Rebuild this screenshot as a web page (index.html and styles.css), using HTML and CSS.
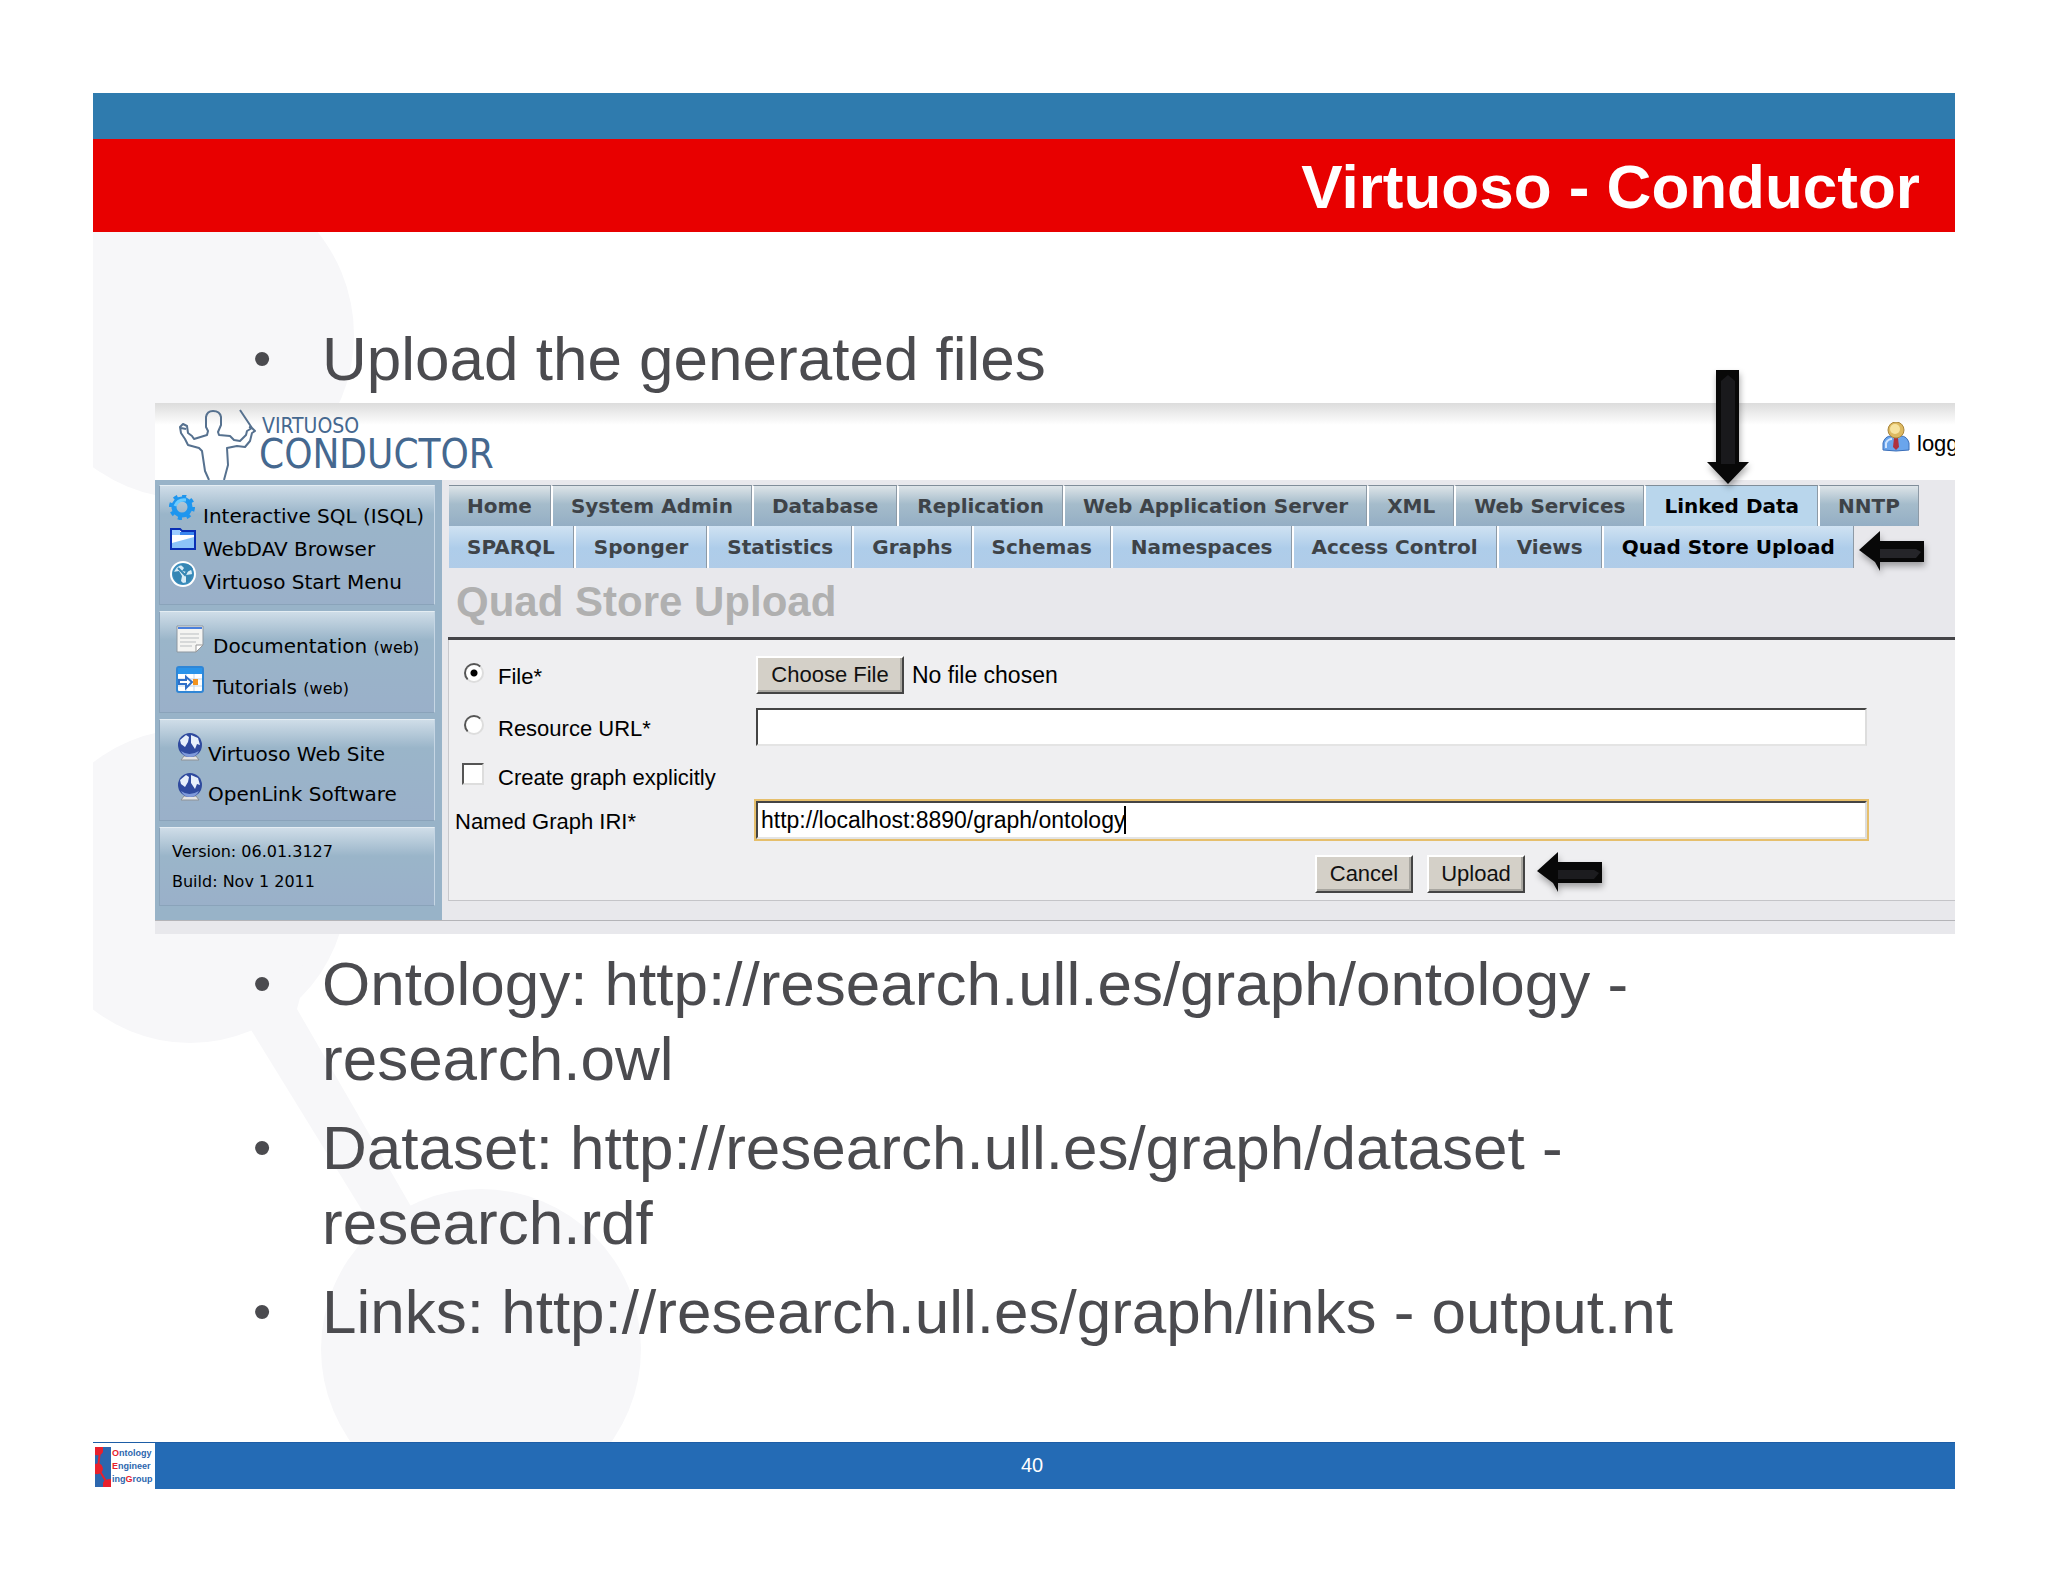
FILE: index.html
```html
<!DOCTYPE html>
<html lang="en">
<head>
<meta charset="utf-8">
<title>Virtuoso - Conductor</title>
<link rel="stylesheet" href="styles.css">
</head>
<body>
<main class="slide">
  <svg class="backdrop" width="600" height="1212" viewBox="93 232 600 1212" aria-hidden="true">
    <g fill="#f7f7f9"><circle cx="190" cy="335" r="164"/><circle cx="190" cy="886" r="157"/><circle cx="481" cy="1349" r="160"/><path d="M240 1012L310 960L297 1009L420 1222L368 1220Z"/></g>
  </svg>
  <header class="masthead">
    <div class="strip"></div>
    <h1 class="title">Virtuoso - Conductor</h1>
  </header>

  <ul class="points points-top"><li>Upload the generated files</li></ul>

  <section class="shot">
    <div class="brand">
      <svg class="figure" width="80" height="72" viewBox="0 0 80 72" fill="none" stroke="#56718f" stroke-width="2" stroke-linejoin="round"><path d="M30 71L26 62L23 42L20 39L9 36L6 30L2 24L1 18L4 15L8 17L9 24L13 27L15 30L28 26L29 22L27 18V8Q28 2 34 2Q41 2 42 8V16L39 23L40 26L51 27L55 31L61 32L67 26L68 22L73 19L61 1M70 18L73 19L76 22L73 24L71 32L66 38L58 37L48 39L49 56L45 71M2 19L7 20"/></svg>
      <div class="wordmark"><span class="word-small">VIRTUOSO</span><span class="word-big">CONDUCTOR</span></div>
      <div class="login">
        <svg width="28" height="30" viewBox="0 0 28 30"><path d="M1 28V21Q3 14 9 14H19Q25 14 27 21V28Q14 30 1 28Z" fill="#6aa5ec" stroke="#3c6fb8"/><path d="M4 26V21Q6 17 10 17" stroke="#cfe4ff" stroke-width="2" fill="none"/><path d="M9 14L14 18L19 14Z" fill="#fff"/><path d="M12 16H16L17 25L14 28L11 25Z" fill="#b0303c"/><circle cx="14" cy="8" r="8" fill="#ddb961" stroke="#a9853a"/><circle cx="13" cy="7" r="5" fill="#f7e3a0"/></svg>
        <span>logg</span>
      </div>
    </div>
    <div class="app">
      <nav class="side" aria-label="Tools">
        <div class="box box-tools">
          <a href="#"><svg width="28" height="28" viewBox="0 0 28 28"><circle cx="13" cy="12" r="8" fill="none" stroke="#1e96ee" stroke-width="5"/><circle cx="13" cy="12" r="11" fill="none" stroke="#1e96ee" stroke-width="4" stroke-dasharray="4 4.600"/><path d="M6 11Q9 4 17 5" stroke="#6cccff" stroke-width="3" fill="none"/></svg>Interactive SQL (ISQL)</a>
          <a href="#"><svg width="28" height="28" viewBox="0 0 28 28"><path d="M2 1H11L13 3H26V21H2Z" fill="#fff" stroke="#0a2fb4" stroke-width="2"/><path d="M3 2H11V7H3Z" fill="#9cccff"/><path d="M11 4H25V7H11Z" fill="#3a86ee"/><path d="M3 15L25 9V20H3Z" fill="#8cc4f8"/></svg>WebDAV Browser</a>
          <a href="#"><svg width="28" height="28" viewBox="0 0 28 28"><circle cx="14" cy="13" r="13" fill="#fff"/><circle cx="14" cy="13" r="10" fill="#d8ecf6" stroke="#3d8fbe" stroke-width="2"/><path d="M4 11L10 10L13 15L12 20L15 23L9 22Q4 18 4 11ZM11 3L15 7L13 10L18 11L24 8Q22 3 16 3ZM17 14L24 13L21 20L17 22Z" fill="#3586b4"/><path d="M9 7L16 14L20 6" stroke="#3586b4" stroke-width="2" fill="none"/></svg>Virtuoso Start Menu</a>
        </div>
        <div class="box box-docs">
          <a href="#"><svg width="28" height="28" viewBox="0 0 28 28"><path d="M1 1H27V20L20 27H1Z" fill="#f4f4f2" stroke="#8d97a0"/><path d="M2 2H26V4H2Z" fill="#4b80dc"/><path d="M4 9H23M4 13H23M4 17H20M4 21H16" stroke="#b9bdc0"/><path d="M20 27V20H27Z" fill="#fff" stroke="#999"/></svg><span>Documentation <small>(web)</small></span></a>
          <a href="#"><svg width="28" height="28" viewBox="0 0 28 28"><rect x="1" y="1" width="26" height="25" rx="2" fill="#fff" stroke="#2f86d6" stroke-width="2"/><path d="M2 2H26V8H2Z" fill="#2a94ea"/><path d="M10 8V25M18 8V25M2 13H26M2 20H26" stroke="#c3d8ec"/><path d="M3 14H10V11L16 16L10 22V18H3Z" fill="#fff" stroke="#2f6fc8" stroke-width="2"/><rect x="17" y="13" width="5" height="6" fill="#f29422"/></svg><span>Tutorials <small>(web)</small></span></a>
        </div>
        <div class="box box-sites">
          <a href="#"><svg width="28" height="30" viewBox="0 0 28 30"><path d="M5 28L8 24H20L23 28Z" fill="#e4e4e4" stroke="#8f9296"/><circle cx="14" cy="13" r="12" fill="#2f4a9e"/><path d="M5 19Q13 25 23 19Q20 25 14 25Q8 25 5 19Z" fill="#7f9ada"/><path d="M4 8L10 3L13 5L12 10L9 15L5 12ZM15 3L22 6L24 13L21 12L19 17L15 11Z" fill="#e8f0fb"/></svg>Virtuoso Web Site</a>
          <a href="#"><svg width="28" height="30" viewBox="0 0 28 30"><path d="M5 28L8 24H20L23 28Z" fill="#e4e4e4" stroke="#8f9296"/><circle cx="14" cy="13" r="12" fill="#2f4a9e"/><path d="M5 19Q13 25 23 19Q20 25 14 25Q8 25 5 19Z" fill="#7f9ada"/><path d="M4 8L10 3L13 5L12 10L9 15L5 12ZM15 3L22 6L24 13L21 12L19 17L15 11Z" fill="#e8f0fb"/></svg>OpenLink Software</a>
        </div>
        <div class="box box-version"><p>Version: 06.01.3127</p><p>Build: Nov 1 2011</p></div>
      </nav>
      <div class="work">
        <nav class="tabs tabs-main" aria-label="Sections"><a href="#">Home</a><a href="#">System Admin</a><a href="#">Database</a><a href="#">Replication</a><a href="#">Web Application Server</a><a href="#">XML</a><a href="#">Web Services</a><a href="#" class="current">Linked Data</a><a href="#">NNTP</a></nav>
        <nav class="tabs tabs-sub" aria-label="Linked Data"><a href="#">SPARQL</a><a href="#">Sponger</a><a href="#">Statistics</a><a href="#">Graphs</a><a href="#">Schemas</a><a href="#">Namespaces</a><a href="#">Access Control</a><a href="#">Views</a><a href="#" class="current">Quad Store Upload</a></nav>
        <h2 class="heading">Quad Store Upload</h2>
        <form class="panel">
          <div class="row row-file"><div class="name"><input type="radio" name="source" id="src-file" checked><label for="src-file">File*</label></div><div class="file"><button type="button" class="btn btn-file">Choose File</button><span>No file chosen</span></div></div>
          <div class="row row-url"><div class="name"><input type="radio" name="source" id="src-url"><label for="src-url">Resource URL*</label></div><input type="text" class="field" aria-label="Resource URL"></div>
          <div class="row row-create"><div class="name"><input type="checkbox" id="create"><label for="create">Create graph explicitly</label></div></div>
          <div class="row row-iri"><label for="iri">Named Graph IRI*</label><div class="focus"><input type="text" class="field field-focus" id="iri" value="http://localhost:8890/graph/ontology"><i class="caret"></i></div></div>
          <div class="actions"><button type="button" class="btn">Cancel</button><button type="button" class="btn">Upload</button></div>
        </form>
      </div>
    </div>
    <div class="foot"></div>
    <svg class="arrow arrow-down" width="44" height="118" viewBox="0 0 44 118"><path d="M10 1H33V93H43L22 115L1 93H10Z" fill="#080808"/><path d="M15 12L22 6L29 12V95H15Z" fill="#19191c"/></svg>
    <svg class="arrow arrow-sub" width="68" height="44" viewBox="0 0 68 44"><path d="M1 20L22 1V11H66V32H22V41L17 32Z" fill="#080808"/><path d="M22 19H58L63 22L58 28H22Z" fill="#252529"/></svg>
    <svg class="arrow arrow-upload" width="68" height="44" viewBox="0 0 68 44"><path d="M1 20L22 1V11H66V32H22V41L17 32Z" fill="#080808"/><path d="M22 19H58L63 22L58 28H22Z" fill="#1c1c1f"/></svg>
  </section>

  <ul class="points points-bottom">
    <li>Ontology: http://research.ull.es/graph/ontology -<br>research.owl</li>
    <li>Dataset: http://research.ull.es/graph/dataset -<br>research.rdf</li>
    <li>Links: http://research.ull.es/graph/links - output.nt</li>
  </ul>

  <footer class="footer">
    <div class="group">
      <svg width="16" height="40" viewBox="0 0 16 40"><path d="M0 0H16V40H0Z" fill="#2c66ae"/><path d="M5 4L3 21L12 36" stroke="#e8202c" stroke-width="2" fill="none"/><path d="M0 0H8V5Q6 9 0 8ZM0 17Q7 15 8 22Q7 28 0 27ZM16 40H8V36Q9 32 16 32Z" fill="#e8202c"/></svg>
      <span class="group-name"><b>O</b>ntology<br><b>E</b>ngineer<br>ing<b>G</b>roup</span>
    </div>
    <span class="number">40</span>
  </footer>
</main>
</body>
</html>
```
FILE: styles.css
```css
* { box-sizing: border-box; }
body { margin: 0; background: #fff; font-family: "Liberation Sans", Arial, sans-serif; }
a { color: inherit; text-decoration: none; }
.slide { position: relative; margin: 93px 93px 92px; }
.backdrop { position: absolute; left: 0; top: 139px; z-index: -1; }

.strip { height: 46px; background: #2f7bae; }
.title { margin: 0; padding: 3px 35px 0; background: #e80000; color: #fff; font-size: 62px; line-height: 90px; text-align: right; }

.points { margin: 0; padding: 0 0 0 229px; list-style: none; color: #4b4b4f; font-size: 62px; line-height: 75px; }
.points li { position: relative; margin-bottom: 14px; }
.points li::before { content: "•"; position: absolute; left: -69px; font-size: 52px; }
.points-top { padding-top: 89px; }
.points-top li { margin-bottom: 7px; }
.points-bottom { padding-top: 12px; }

.shot { position: relative; margin-left: 62px; background: #e8e8ec; }
.brand { display: flex; height: 77px; padding-left: 24px; overflow: hidden; background: linear-gradient(#dcdcdc, #fff 22px); }
.figure { margin-top: 6px; }
.wordmark { display: flex; flex-direction: column; padding-top: 12px; color: #45688f; font-family: "DejaVu Sans Condensed", Lato, sans-serif; }
.word-small { padding-left: 3px; font-size: 21px; line-height: 22px; }
.word-big { font-size: 40px; line-height: 34px; }
.login { display: flex; gap: 7px; width: 73px; margin-left: auto; padding-top: 19px; overflow: hidden; font-size: 22px; line-height: 44px; white-space: nowrap; }
.login svg { flex: none; }

.app { display: flex; border-bottom: 1px solid #b4b4b8; }
.side { display: flex; flex: none; flex-direction: column; gap: 6px; width: 287px; padding: 5px 7px 14px 4px; background: #98b3c8; font-family: "DejaVu Sans", Verdana, sans-serif; font-size: 20px; }
.box { border: 1px solid #8aa3ba; border-top-color: #e4edf3; border-right-color: #c6d6e4; background: linear-gradient(#cfdde8, #9ab5c9 28px, #9ab0c9); }
.box a { display: flex; align-items: flex-start; white-space: nowrap; }
.box svg { flex: none; }
.box small { font-size: 16px; }
.box-tools { height: 120px; padding: 9px 0 0 9px; }
.box-tools a { gap: 6px; height: 33px; line-height: 42px; }
.box-docs { height: 102px; padding: 13px 0 0 16px; }
.box-docs a { gap: 9px; height: 41px; line-height: 42px; }
.box-sites { height: 102px; padding: 12px 0 0 16px; }
.box-sites a { gap: 4px; height: 40px; line-height: 44px; }
.box-version { height: 79px; padding: 9px 0 0 12px; font-size: 16px; line-height: 30px; }
.box p { margin: 0; }

.work { flex: 1; min-width: 0; padding: 5px 0 17px 6px; }
.tabs { display: flex; padding-left: 1px; color: #3e4348; font: bold 20px/40px "DejaVu Sans", Verdana, sans-serif; white-space: nowrap; }
.tabs a { padding: 0 18px; border-right: 1px solid #8d9aa6; }
.tabs a + a { border-left: 2px solid #fff; }
.tabs .current { color: #000; }
.tabs-main a { border-top: 1px solid #7f8d99; background: linear-gradient(#dde4e8, #a5bccb 18px, #94aec4); }
.tabs-main .current { background: #b9d6ec; }
.tabs-sub a { background: linear-gradient(#cfe2f2, #aecdea 22px, #b0cce8); line-height: 42px; }
.heading { margin: 0; padding: 6px 0 7px 8px; border-bottom: 3px solid #444448; color: #b0b0b0; font-size: 42px; line-height: 56px; }

.panel { padding: 11px 88px 0 0; border-left: 1px solid #c8c8cc; border-bottom: 1px solid #c4c4c8; background: #efeff1; font-size: 22px; }
.row { display: grid; grid-template-columns: 301px 1fr; align-items: center; padding-left: 6px; }
.row label { padding-top: 3px; }
.row-file { height: 48px; }
.row-url { height: 56px; }
.row-create { height: 42px; }
.row-iri { height: 46px; }
.name { display: flex; align-items: center; }
.name input { appearance: none; flex: none; width: 20px; height: 20px; margin: 0 14px 5px 9px; border: 2px solid; border-color: #555 #ddd #ddd #555; background: #fff; }
.name input[type="radio"] { border-radius: 50%; }
.name input:checked { background: radial-gradient(circle, #000 3px, #fff 4px); }
.name input[type="checkbox"] { width: 22px; height: 22px; margin-left: 7px; }
.file { display: flex; align-items: center; gap: 8px; font-size: 23px; }
.btn { min-width: 98px; height: 38px; padding: 0 11px; border: 2px solid; border-color: #fff #444 #444 #fff; box-shadow: inset -2px -2px #a8a6a0; background: #d4d0c8; color: #111; font: 22px "Liberation Sans", Arial, sans-serif; }
.btn-file { min-width: 148px; }
.field { display: block; width: 100%; height: 38px; padding: 0 3px; border: 2px solid; border-color: #444 #ddd #e4e4e4 #444; background: #fff; font: 23px "Liberation Sans", Arial, sans-serif; }
.focus { position: relative; }
.field-focus { box-shadow: 0 0 0 2px #e6bf6c; }
.caret { position: absolute; left: 368px; top: 5px; width: 2px; height: 28px; background: #000; }
.actions { display: flex; justify-content: flex-end; gap: 14px; height: 57px; padding: 12px 342px 0 0; }
.foot { height: 13px; }

.arrow { position: absolute; filter: drop-shadow(1px 4px 3px #0005); }
.arrow-down { right: 205px; top: -34px; }
.arrow-sub { right: 29px; top: 127px; }
.arrow-upload { right: 351px; top: 448px; }

.footer { display: flex; height: 47px; margin-top: 93px; border-top: 1px solid #1d5da6; background: #246bb5; color: #fff; }
.group { display: flex; gap: 1px; width: 62px; padding: 4px 2px; background: #fff; color: #2c66ae; }
.group svg { flex: none; }
.group-name { font: bold 9px/13px "Liberation Sans", Arial, sans-serif; }
.group b { color: #e8202c; }
.number { flex: 1; padding-right: 46px; font-size: 20px; line-height: 45px; text-align: center; }
```
